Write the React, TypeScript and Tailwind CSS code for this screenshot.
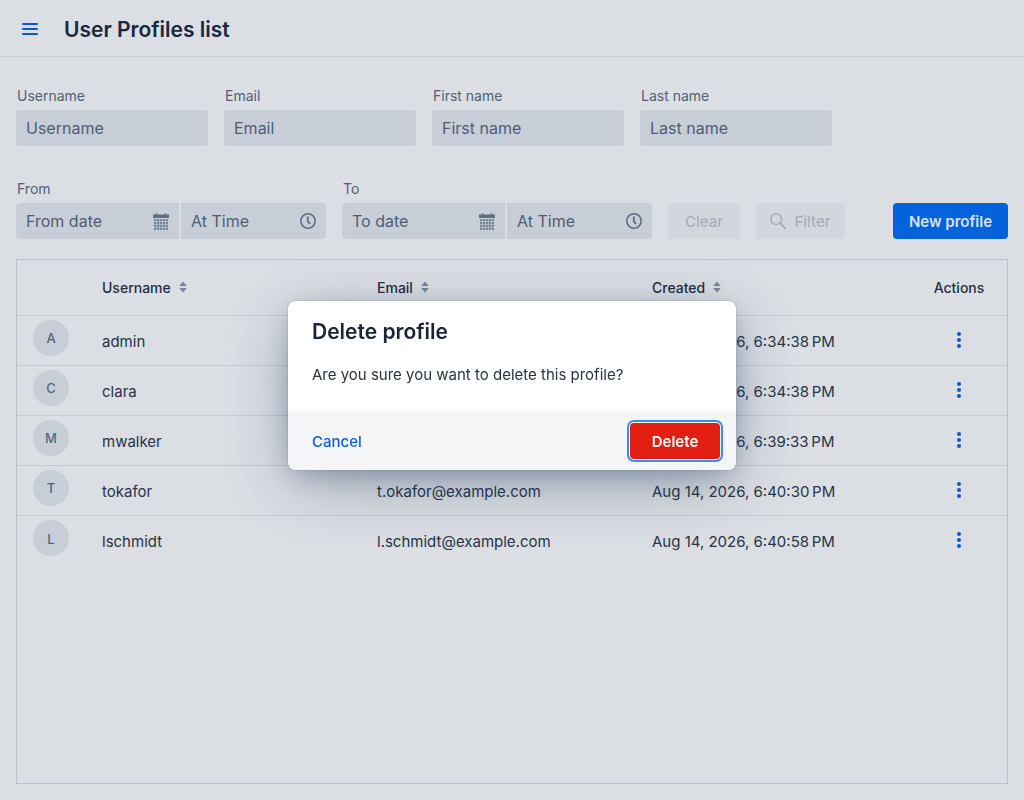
import { useState } from 'react';
import type { ReactNode } from 'react';

interface Profile {
  username: string;
  email: string;
  created: string;
}

const profiles: Profile[] = [
  { username: 'admin', email: 'admin@example.com', created: 'Aug 14, 2026, 6:34:38\u202fPM' },
  { username: 'clara', email: 'clara@example.com', created: 'Aug 14, 2026, 6:34:38\u202fPM' },
  { username: 'mwalker', email: 'm.walker@example.com', created: 'Aug 14, 2026, 6:39:33\u202fPM' },
  { username: 'tokafor', email: 't.okafor@example.com', created: 'Aug 14, 2026, 6:40:30\u202fPM' },
  { username: 'lschmidt', email: 'l.schmidt@example.com', created: 'Aug 14, 2026, 6:40:58\u202fPM' },
];

const textFilters = [
  { id: 'username', label: 'Username' },
  { id: 'email', label: 'Email' },
  { id: 'first-name', label: 'First name' },
  { id: 'last-name', label: 'Last name' },
];

const labelClass = 'block px-px text-[14px] leading-5 text-[#526076]';
const inputClass =
  'h-9 w-full bg-[#c7ced8] px-2.5 text-[16px] text-[#1c2b40] outline-none placeholder:text-[#4f5d74]';

function CalendarIcon() {
  return (
    <svg viewBox="0 0 16 17" className="h-[17px] w-4" fill="currentColor" aria-hidden="true">
      <path d="M0 1.5h2.5V0.5h2v1h7v-1h2v1H16V5H0z" />
      <path d="M1 6h14v11H1z" opacity="0.25" />
      {[6, 9, 12, 15].map((y) =>
        [1, 4, 7, 10, 13].map((x) => (
          <rect key={`${x}-${y}`} x={x} y={y} width="2" height="2" opacity="0.7" />
        ))
      )}
    </svg>
  );
}

function ClockIcon() {
  return (
    <svg viewBox="0 0 16 16" className="size-4" fill="none" stroke="currentColor" aria-hidden="true">
      <circle cx="8" cy="8" r="7.2" strokeWidth="1.6" />
      <path d="M7.8 3.5v4.6l2.2 3" strokeWidth="1.8" />
    </svg>
  );
}

function SearchIcon() {
  return (
    <svg viewBox="0 0 16 16" className="size-4" fill="none" stroke="currentColor" aria-hidden="true">
      <circle cx="6.2" cy="6.2" r="5.4" strokeWidth="1.5" />
      <path d="M10.2 10.2l4.8 4.8" strokeWidth="2" strokeLinecap="round" />
    </svg>
  );
}

function SortIcon() {
  return (
    <svg viewBox="0 0 8 12" className="h-3 w-2" fill="#76859a" aria-hidden="true">
      <path d="M4 0.5L7.8 5H0.2z" />
      <path d="M4 11.5L0.2 7h7.6z" />
    </svg>
  );
}

function IconField({ id, label, icon, className }: { id: string; label: string; icon: ReactNode; className: string }) {
  return (
    <div className="relative">
      <input id={id} aria-label={label} placeholder={label} className={`${inputClass} ${className}`} />
      <span className="pointer-events-none absolute inset-y-0 right-2.5 flex items-center text-[#5f6e83]">{icon}</span>
    </div>
  );
}

function DateTimeField({ id, label }: { id: string; label: string }) {
  return (
    <div className="w-[310px]">
      <label htmlFor={id} className={labelClass}>
        {label}
      </label>
      <div className="mt-1 grid grid-cols-[163fr_145fr] gap-0.5">
        <IconField id={id} label={`${label} date`} icon={<CalendarIcon />} className="rounded-l-sm" />
        <IconField id={`${id}-time`} label="At Time" icon={<ClockIcon />} className="rounded-r-sm" />
      </div>
    </div>
  );
}

function DeleteDialog({ onClose }: { onClose: () => void }) {
  return (
    <div className="fixed inset-0 flex items-center justify-center p-4 pb-[45px]">
      <div
        role="dialog"
        aria-modal="true"
        aria-labelledby="dialog-title"
        className="w-[448px] overflow-hidden rounded-lg bg-white shadow-[0_0_0_1px_rgba(28,56,90,0.08),0_6px_24px_-4px_rgba(28,56,90,0.3),0_16px_64px_-8px_rgba(28,56,90,0.42)]"
      >
        <div className="px-6 pt-[17px] pb-6">
          <h2 id="dialog-title" className="text-[21px] leading-7 font-semibold text-[#192434]">
            Delete profile
          </h2>
          <p className="mt-4 text-[15px] leading-[25px] text-[#263345]">Are you sure you want to delete this profile?</p>
        </div>
        <div className="flex items-center justify-between bg-[#f3f5f7] pt-3 pr-4 pb-[11px] pl-6">
          <button type="button" onClick={onClose} className="h-9 pt-0.5 text-[15px] font-medium text-[#0b60d6]">
            Cancel
          </button>
          <button
            type="button"
            onClick={onClose}
            className="h-9 w-[90px] rounded-sm bg-[#e21d12] pt-0.5 text-[15px] font-semibold text-white shadow-[0_0_0_1px_white,0_0_0_3px_#3d8cf5]"
          >
            Delete
          </button>
        </div>
      </div>
    </div>
  );
}

export default function App() {
  const [dialogOpen, setDialogOpen] = useState(true);

  return (
    <div className="flex min-h-screen flex-col bg-[#dbdee3] font-['Inter',sans-serif] text-[15px] text-[#263549]">
      <header className="flex h-[57px] items-center border-b border-[#c7ccd5] px-[22px] pt-0.5">
        <button type="button" aria-label="Menu toggle" className="text-[#0a58cc]">
          <svg viewBox="0 0 16 14" className="h-3.5 w-4" fill="none" stroke="currentColor" strokeWidth="2" strokeLinecap="round">
            <path d="M1 2h14M1 7h14M1 12h14" />
          </svg>
        </button>
        <h1 className="ml-[26px] pt-0.5 text-[21px] leading-7 font-semibold text-[#1a283d]">User Profiles list</h1>
      </header>

      <main className="flex flex-1 flex-col px-4 pt-[29px] pb-4">
        {/* Filters */}
        <div className="flex flex-wrap gap-4">
          {textFilters.map((f) => (
            <div key={f.id} className="w-48">
              <label htmlFor={f.id} className={labelClass}>
                {f.label}
              </label>
              <input id={f.id} placeholder={f.label} className={`${inputClass} mt-1 rounded-sm`} />
            </div>
          ))}
        </div>
        <div className="mt-[33px] flex flex-wrap items-end gap-4">
          <DateTimeField id="from" label="From" />
          <DateTimeField id="to" label="To" />
          <button type="button" disabled className="h-9 w-[72px] rounded-sm bg-[#d2d7de] pt-0.5 font-medium text-[#a5afbd]">
            Clear
          </button>
          <button
            type="button"
            disabled
            className="flex h-9 w-[89px] items-center justify-center gap-2 rounded-sm bg-[#d2d7de] font-medium text-[#a5afbd]"
          >
            <SearchIcon />
            <span className="pt-0.5">Filter</span>
          </button>
          <button type="button" className="ml-auto h-9 w-[115px] rounded-sm bg-[#0462dc] pt-0.5 font-semibold text-[#dbe1ea]">
            New profile
          </button>
        </div>

        {/* Profiles grid */}
        <div className="mt-5 flex-1 border border-[#b9c1cd]">
          <table className="w-full table-fixed text-left">
            <thead>
              <tr className="h-[55px] border-b border-[#c5cbd5] text-[14px] text-[#1f2e43]">
                <th className="w-[69px]" aria-label="Avatar" />
                {['Username', 'Email', 'Created'].map((col) => (
                  <th key={col} className="px-4 font-medium">
                    <button type="button" className="flex items-center gap-2">
                      {col}
                      <SortIcon />
                    </button>
                  </th>
                ))}
                <th className="w-24 text-center font-medium">Actions</th>
              </tr>
            </thead>
            <tbody>
              {profiles.map((p, i) => (
                <tr key={p.username} className={i < profiles.length - 1 ? 'h-[50px] border-b border-[#c5cbd5]' : 'h-[50px]'}>
                  <td className="pb-1 pl-4">
                    <div className="flex size-9 items-center justify-center rounded-full bg-[#c7ced8] pt-0.5 text-[13px] font-medium text-[#56647a]">
                      {p.username[0].toUpperCase()}
                    </div>
                  </td>
                  <td className="px-4 pt-1">{p.username}</td>
                  <td className="px-4 pt-1">{p.email}</td>
                  <td className="px-4 pt-1">{p.created}</td>
                  <td>
                    <button
                      type="button"
                      aria-label={`Actions for ${p.username}`}
                      onClick={() => setDialogOpen(true)}
                      className="mx-auto flex h-8 w-8 items-center justify-center text-[#0a58cc]"
                    >
                      <svg viewBox="0 0 4 16" className="h-4 w-1" fill="currentColor">
                        <circle cx="2" cy="2" r="2" />
                        <circle cx="2" cy="8" r="2" />
                        <circle cx="2" cy="14" r="2" />
                      </svg>
                    </button>
                  </td>
                </tr>
              ))}
            </tbody>
          </table>
        </div>
      </main>

      {dialogOpen && <DeleteDialog onClose={() => setDialogOpen(false)} />}
    </div>
  );
}
